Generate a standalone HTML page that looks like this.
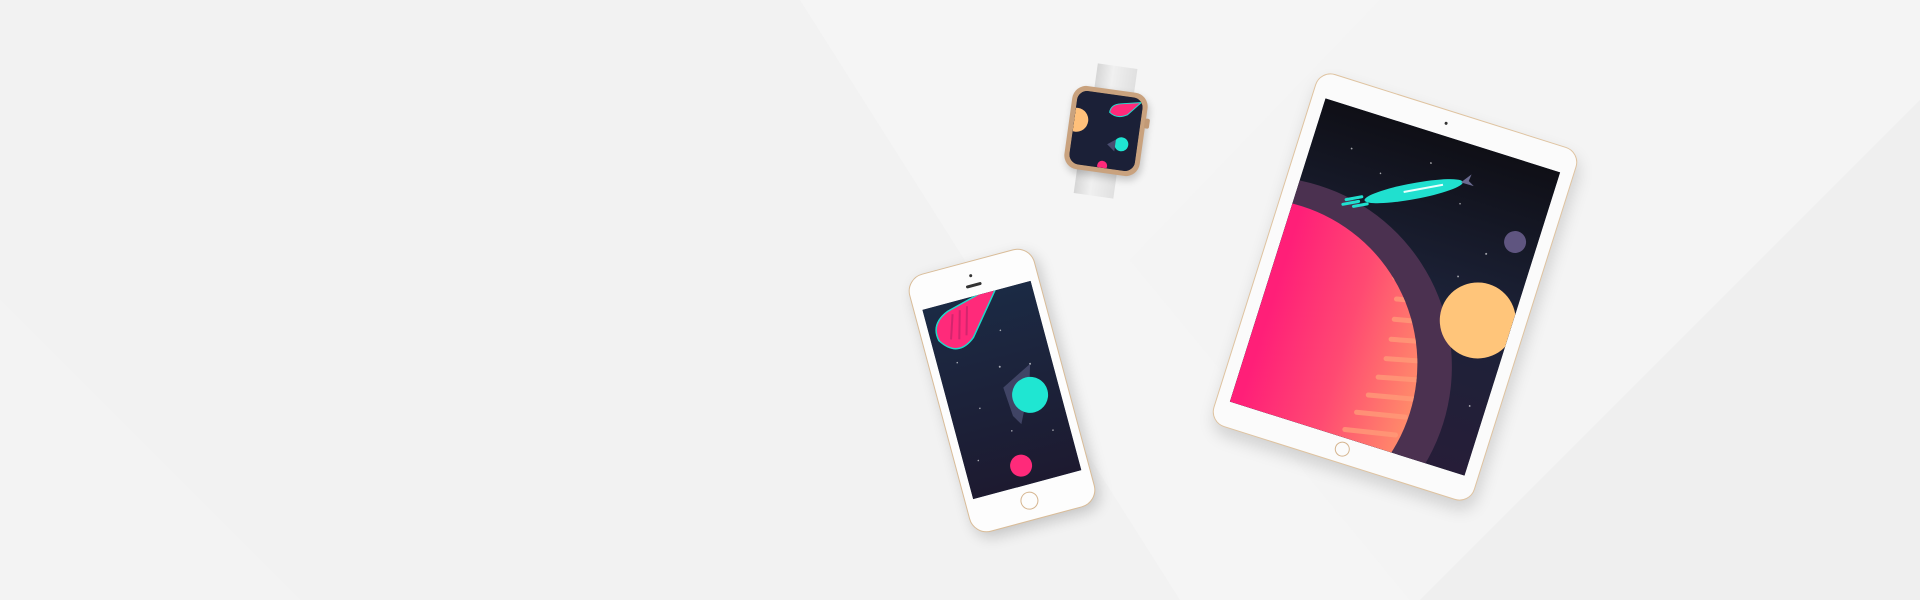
<!DOCTYPE html>
<html><head><meta charset="utf-8"><style>
html,body{margin:0;padding:0}
body{width:1920px;height:600px;overflow:hidden;position:relative;background:#f1f1f1;font-family:"Liberation Sans",sans-serif}
.abs{position:absolute}
</style></head><body>
<svg class="abs" style="left:0;top:0" width="1920" height="600">
<rect width="1920" height="600" fill="#f1f1f1"/>
<polygon points="0,0 800,0 1410,600 0,600" fill="#f2f2f2"/>
<polygon points="800,0 1380,0 1130,260 1410,600 1180,600" fill="#f5f5f5"/>
<polygon points="1380,0 1920,0 1920,100 1420,600 1410,600 1130,260" fill="#f4f4f4"/>
<polygon points="1920,100 1920,600 1420,600" fill="#efefef"/>
<polygon points="0,300 0,600 300,600" fill="#f3f3f3"/>
</svg>

<!-- Watch bands -->
<div class="abs" style="left:1095px;top:66px;width:40px;height:38px;background:linear-gradient(90deg,#d6d6d6,#f0f0f0 40%,#e0e0e0);transform:rotate(8deg)"></div>
<div class="abs" style="left:1076px;top:160px;width:40px;height:36px;background:linear-gradient(90deg,#d6d6d6,#f0f0f0 40%,#e0e0e0);transform:rotate(8deg)"></div>
<!-- Watch case -->
<div class="abs" style="left:1068px;top:89px;width:76px;height:84px;border-radius:14px;background:#c9a27e;transform:rotate(8deg);box-shadow:2px 4px 8px rgba(0,0,0,.2)">
  <div class="abs" style="left:5px;top:5px;width:66px;height:74px;border-radius:10px;background:#161a2c;overflow:hidden">
    <svg width="66" height="74">
      <rect width="66" height="74" fill="#1b2037"/>
      <circle cx="2" cy="30" r="12" fill="#ffc07a"/>
      <path d="M34 18 Q34 10 44 8 L64 4 L52 18 Q42 24 34 18 Z" fill="#ff2a7a" stroke="#20e0d0" stroke-width="1"/>
      <circle cx="50" cy="48" r="7" fill="#1fe6d2"/>
      <path d="M36 50 L44 44 L44 56 Z" fill="#4a4d70"/>
      <circle cx="34" cy="72" r="5" fill="#ff2a7a"/>
    </svg>
  </div>
  <div class="abs" style="right:-4px;top:24px;width:5px;height:10px;background:#c29a76;border-radius:2px"></div>
</div>

<!-- Phone -->
<div class="abs" style="left:937px;top:257px;width:128px;height:265px;border-radius:18px;background:#fdfdfd;border:1.5px solid #d9bc98;transform:rotate(-15deg);box-shadow:3px 6px 14px rgba(0,0,0,.18)">
  <div class="abs" style="left:8px;top:34px;width:112px;height:196px;background:#192238;overflow:hidden">
    <svg width="112" height="196">
      <defs><linearGradient id="pg" x1="0" y1="0" x2="0" y2="1"><stop offset="0" stop-color="#1b2a44"/><stop offset="1" stop-color="#1d1a30"/></linearGradient></defs>
      <rect width="112" height="196" fill="url(#pg)"/>
      <g fill="#fff" opacity=".6"><circle cx="20" cy="60" r=".8"/><circle cx="70" cy="40" r=".8"/><circle cx="90" cy="80" r="1"/><circle cx="30" cy="110" r=".8"/><circle cx="55" cy="140" r=".8"/><circle cx="95" cy="150" r=".8"/><circle cx="15" cy="160" r=".8"/><circle cx="60" cy="75" r="1"/></g>
      <path d="M8 34 Q4 16 24 8 L80 -6 L42 40 Q22 56 8 34 Z" fill="#ff2a7a" stroke="#1fd8c8" stroke-width="1.5"/>
      <g stroke="#c0246a" stroke-width="2" opacity=".7"><path d="M28 12 L20 36"/><path d="M36 10 L28 38"/><path d="M44 8 L36 36"/></g>
      <path d="M58 96 L90 80 L84 100 L66 136 L60 126 Z" fill="#4a4d70" opacity=".8"/>
      <circle cx="82" cy="110" r="18" fill="#1fe6d2"/>
      <circle cx="55" cy="176" r="11" fill="#ff2a7a"/>
    </svg>
  </div>
  <div class="abs" style="left:56px;top:22px;width:16px;height:3px;border-radius:2px;background:#333"></div>
  <div class="abs" style="left:62px;top:12px;width:3px;height:3px;border-radius:50%;background:#333"></div>
  <div class="abs" style="left:53px;top:237px;width:18px;height:18px;border-radius:50%;border:1.5px solid #d5b48e;box-sizing:border-box"></div>
</div>

<!-- iPad -->
<div class="abs" style="left:1258px;top:102px;width:272px;height:368px;border-radius:16px;background:#fbfbfb;border:1.5px solid #dfc3a0;transform:rotate(17.5deg);box-shadow:4px 8px 16px rgba(0,0,0,.15)">
  <div class="abs" style="left:13px;top:25px;width:246px;height:318px;background:#1a1d2e;overflow:hidden">
    <svg width="246" height="318">
      <defs>
        <linearGradient id="ig" x1="0" y1="0" x2="0" y2="1"><stop offset="0" stop-color="#0f0f16"/><stop offset=".5" stop-color="#1c2238"/><stop offset="1" stop-color="#261d38"/></linearGradient>
        <linearGradient id="pl" x1="0" y1="0" x2="1" y2="0"><stop offset=".5" stop-color="#ff1f78"/><stop offset=".75" stop-color="#ff4a72"/><stop offset="1" stop-color="#ff8a6a"/></linearGradient>
        <clipPath id="pc"><circle cx="10" cy="275" r="165"/></clipPath>
      </defs>
      <rect width="246" height="318" fill="url(#ig)"/>
      <g fill="#fff" opacity=".6"><circle cx="40" cy="40" r=".9"/><circle cx="120" cy="30" r=".9"/><circle cx="200" cy="100" r="1"/><circle cx="220" cy="160" r=".9"/><circle cx="180" cy="130" r=".9"/><circle cx="230" cy="250" r=".9"/><circle cx="75" cy="55" r=".8"/><circle cx="160" cy="60" r=".8"/></g>
      <circle cx="20" cy="275" r="190" fill="#4b3150"/>
      <circle cx="212" cy="166" r="38" fill="#ffc57a"/>
      <circle cx="10" cy="275" r="165" fill="url(#pl)"/>
      <g clip-path="url(#pc)" stroke="#ff9a78" stroke-width="5" stroke-linecap="round" opacity=".8">
        <path d="M110 130 L150 122"/><path d="M120 150 L170 140"/><path d="M128 170 L175 160"/><path d="M132 190 L178 180"/><path d="M135 210 L178 200"/><path d="M136 230 L178 220"/><path d="M134 250 L176 240"/><path d="M130 270 L176 260"/><path d="M124 290 L172 280"/><path d="M118 310 L168 300"/><path d="M98 116 L130 108"/>
      </g>
      <circle cx="224" cy="80" r="11" fill="#5f5580"/>
      <g transform="translate(112,62) rotate(-28)">
        <ellipse cx="0" cy="0" rx="50" ry="8" fill="#20e0cf"/>
        <path d="M48 0 L60 -6 L56 0 L60 6 Z" fill="#6a6a90"/>
        <path d="M-10 -1 L30 -1" stroke="#e8fffd" stroke-width="2"/>
        <g stroke="#20e0cf" stroke-width="3" stroke-linecap="round"><path d="M-68 -4 L-52 -4"/><path d="M-62 4 L-48 4"/><path d="M-72 0 L-56 0"/></g>
      </g>
    </svg>
  </div>
  <div class="abs" style="left:134px;top:11px;width:3px;height:3px;border-radius:50%;background:#333"></div>
  <div class="abs" style="left:127px;top:347px;width:15px;height:15px;border-radius:50%;border:1.5px solid #d5b48e;box-sizing:border-box"></div>
</div>
</body></html>
